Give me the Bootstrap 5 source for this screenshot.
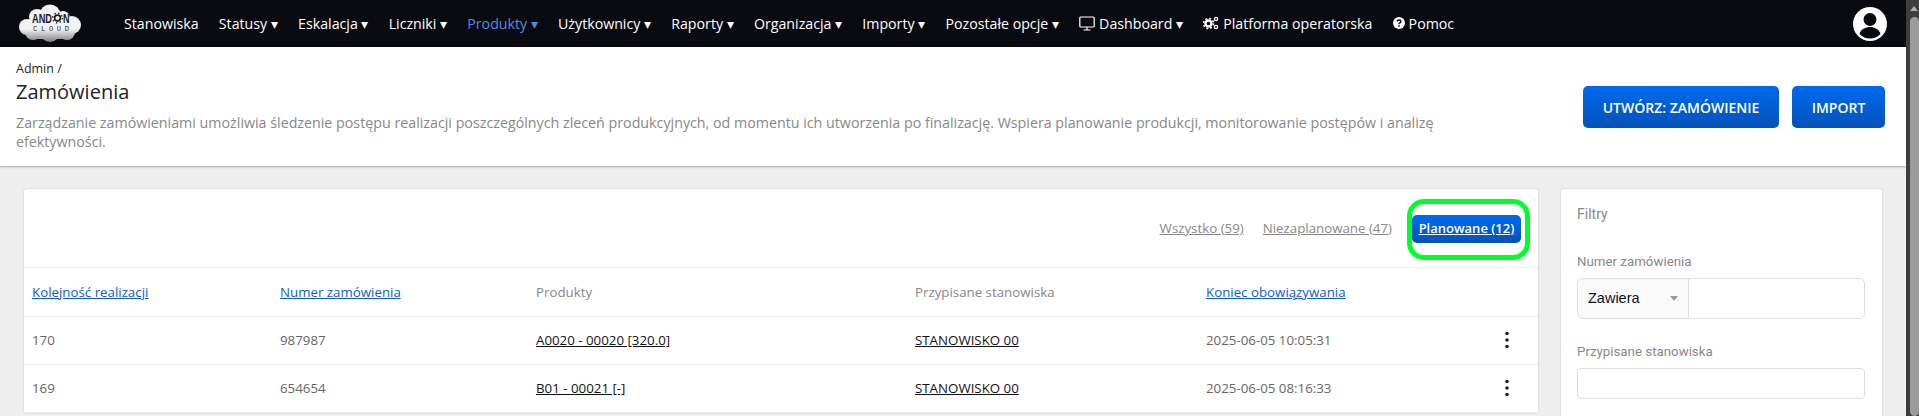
<!DOCTYPE html>
<html lang="pl">
<head>
  <meta charset="UTF-8">
  <meta name="viewport" content="width=device-width, initial-scale=1.0">
  <title>Zamówienia</title>
  <link href="https://cdn.jsdelivr.net/npm/bootstrap@5.3.0/dist/css/bootstrap.min.css" rel="stylesheet">
  <style>
    html, body { height: 416px; overflow: hidden; }
    body { font-family: "Open Sans", sans-serif; font-size: 14px; background: #eee; color: #666; }
    .page-shell { display: flex; height: 416px; }
    .page-main { flex: 1 1 auto; min-width: 0; overflow: hidden; }
    .fake-scroll { width: 13px; flex: none; background: #3d3d3d; display: flex; flex-direction: column; align-items: center; padding-left: 3px; }
    .fake-scroll i { margin-top: 6px; width: 0; height: 0; border: 4px solid transparent; border-top: 0; border-bottom: 5px solid #aaa; }
    .fake-scroll b { width: 9px; height: 400px; margin-top: 6px; background: #9b9b9b; border-radius: 5px; }
    .top-bar { height: 47px; background: #0a0b10; padding: 0 0 0 18px; }
    .top-bar .nav-link { color: #fff; font-size: 14.2px; padding: 0; white-space: nowrap; display: flex; align-items: center; gap: 4px; }
    .top-bar .nav-link.active { color: #4a90e2; }
    .top-links { margin-left: 42px; gap: 20.2px; }
    .logo-cloud { width: 64px; height: 43px; flex: none; }
    .user-pic { width: 34px; height: 34px; margin-right: 19px; }
    .page-head { height: 119px; background: #fff; box-shadow: 0 1px 2px rgba(0,0,0,.3); padding: 13px 21px 0 16px; }
    .crumb { color: #222; font-size: 12.5px; line-height: 17px; margin-bottom: 1px; }
    .page-title { color: #222; font-size: 20px; line-height: 28px; margin: 0 0 8px; font-weight: 400; }
    .page-desc { color: #888; font-size: 14.26px; line-height: 18.5px; margin: 0; width: 1450px; }
    .blue-btn { background: linear-gradient(#0069ee, #0452b8); border: 0; color: #fff; font-weight: 600; border-radius: 5px; height: 42px; font-size: 14px; display: flex; align-items: center; justify-content: center; }
    .head-btns { margin-top: 26px; gap: 13px; }
    .content-wrap { padding: 23px 0 0 24px; gap: 23px; }
    .list-box { width: 1514px; flex: none; background: #fff; border-radius: 3px; box-shadow: 0 0 2px rgba(0,0,0,.2); position: relative; }
    .tabs-row { height: 79px; border-bottom: 1px solid #eee; padding: 1px 17px 0 0; gap: 19px; font-size: 13.3px; }
    .tabs-row a { color: #888; }
    .tabs-row a.on { background: linear-gradient(#0069ee, #0452b8); color: #fff; border-radius: 5px; width: 109px; height: 28px; margin-left: 1px; font-weight: 600; font-size: 13px; display: flex; align-items: center; justify-content: center; }
    .green-ring { position: absolute; left: 1383px; top: 10px; width: 123px; height: 61px; border: 5px solid #00ff2a; border-radius: 17px; }
    .order-table { table-layout: fixed; margin: 0; font-size: 13.3px; color: #666; }
    .order-table th, .order-table td { height: 48px; padding: 2px 8px 0; vertical-align: middle; border-bottom: 1px solid #eee; font-weight: 400; color: #666; }
    .order-table th { color: #888; }
    .order-table th a { color: #0d5bd1; }
    .order-table td a { color: #111; }
    .kebab { width: 4px; height: 18px; display: block; left: 307px; }
    .filter-box { width: 321px; flex: none; height: 300px; background: #fff; border-radius: 3px; box-shadow: 0 0 2px rgba(0,0,0,.2); padding: 16px 16px; font-family: Roboto, sans-serif; }
    .filter-box h6 { color: #888; font-size: 14px; font-weight: 400; line-height: 18px; margin: 0 0 31px; }
    .filter-box label { color: #888; font-size: 13.3px; line-height: 16px; margin: 0 0 8px; display: block; }
    .filter-box .input-group { height: 41px; margin-bottom: 25px; width: 288px; }
    .input-group > .pick-type { width: 112px; flex: none; background-color: #fafafa; background-size: 8px 5px; background-position: right 10px center; background-image: url("data:image/svg+xml,%3csvg xmlns='http://www.w3.org/2000/svg' viewBox='0 0 8 5'%3e%3cpath d='M0 0h8L4 5z' fill='%23999'/%3e%3c/svg%3e"); font-family: "Liberation Sans", sans-serif; font-size: 14.5px; color: #111; border-color: #ddd; padding-left: 10px; }
    .filter-box .form-control { border-color: #ddd; }
    .plain-input { height: 31px; width: 288px; border: 1px solid #ddd; border-radius: 4px; }
  </style>
</head>
<body>
  <div class="page-shell">
    <div class="page-main">
      <nav class="top-bar d-flex align-items-center">
        <svg class="logo-cloud" viewBox="18 3 64 43">
          <defs>
            <linearGradient id="cloudFill" gradientUnits="userSpaceOnUse" x1="0" y1="30" x2="0" y2="44"><stop offset="0" stop-color="#f2f2f2"/><stop offset="1" stop-color="#777"/></linearGradient>
            <filter id="cloudSoft"><feGaussianBlur stdDeviation=".6"/></filter>
          </defs>
          <g fill="url(#cloudFill)" filter="url(#cloudSoft)">
            <circle cx="50" cy="16" r="10.500"/><circle cx="37" cy="18" r="8"/><circle cx="27" cy="28" r="8"/>
            <circle cx="72" cy="26" r="9"/><circle cx="63" cy="19" r="7"/><circle cx="33" cy="33" r="8"/>
            <circle cx="50" cy="33" r="10"/><circle cx="67" cy="33" r="8"/>
            <rect x="30" y="20" width="40" height="20"/>
          </g>
          <text x="32" y="24" font-family="Liberation Sans" font-weight="700" font-size="13" fill="#1a1a1a" textLength="20" lengthAdjust="spacingAndGlyphs">AND</text>
          <circle cx="57.500" cy="19" r="2.900" fill="none" stroke="#1a1a1a" stroke-width="1.600"/>
          <circle cx="57.500" cy="19" r="4.800" fill="none" stroke="#1a1a1a" stroke-width="1.400" stroke-dasharray="1.400 2.370"/>
          <text x="63" y="24" font-family="Liberation Sans" font-weight="700" font-size="13" fill="#1a1a1a" textLength="6.500" lengthAdjust="spacingAndGlyphs">N</text>
          <text x="33" y="31.500" font-family="Liberation Mono" font-size="7" fill="#1a1a1a" textLength="36">CLOUD</text>
        </svg>
        <div class="nav top-links flex-nowrap">
          <a class="nav-link" href="#">Stanowiska</a>
          <a class="nav-link" href="#">Statusy ▾</a>
          <a class="nav-link" href="#">Eskalacja ▾</a>
          <a class="nav-link" href="#">Liczniki ▾</a>
          <a class="nav-link active" href="#">Produkty ▾</a>
          <a class="nav-link" href="#">Użytkownicy ▾</a>
          <a class="nav-link" href="#">Raporty ▾</a>
          <a class="nav-link" href="#">Organizacja ▾</a>
          <a class="nav-link" href="#">Importy ▾</a>
          <a class="nav-link" href="#">Pozostałe opcje ▾</a>
          <a class="nav-link" href="#">
            <svg width="16" height="15" viewBox="0 0 16 15" fill="none" stroke="#fff" stroke-width="1.2"><rect x=".8" y="1" width="14.400" height="10" rx="1"/><path d="M4.500 14h7M8 11v3"/></svg>
            Dashboard ▾</a>
          <a class="nav-link" href="#">
            <svg width="16" height="14" viewBox="0 0 16 14" fill="none" stroke="#fff">
              <circle cx="5.500" cy="7.500" r="3" stroke-width="2.400"/>
              <circle cx="5.500" cy="7.500" r="5" stroke-width="1.600" stroke-dasharray="2 1.930"/>
              <circle cx="13" cy="3" r="1.600" stroke-width="1.300"/>
              <circle cx="13" cy="11" r="1.600" stroke-width="1.300"/>
            </svg>
            Platforma operatorska</a>
          <a class="nav-link" href="#">
            <svg width="12" height="12" viewBox="0 0 12 12"><circle cx="6" cy="6" r="6" fill="#fff"/><path d="M4.200 4.600c0-2.200 3.700-2.200 3.700 0 0 1.400-1.900 1.300-1.900 2.600" fill="none" stroke="#0a0b10" stroke-width="1.400"/><rect x="5.200" y="8.300" width="1.600" height="1.500" fill="#0a0b10"/></svg>
            Pomoc</a>
        </div>
        <svg class="user-pic ms-auto" viewBox="0 0 34 34">
          <circle cx="17" cy="17" r="17" fill="#fff"/>
          <circle cx="17" cy="12.500" r="6.500" fill="#0a0b10"/>
          <path d="M6.500 27c1.500-5 6-7 10.500-7s9 2 10.500 7c-3 3-6.500 4.500-10.500 4.500S9.500 30 6.500 27z" fill="#0a0b10"/>
        </svg>
      </nav>

      <header class="page-head d-flex justify-content-between">
        <div>
          <div class="crumb">Admin /</div>
          <h1 class="page-title">Zamówienia</h1>
          <p class="page-desc">Zarządzanie zamówieniami umożliwia śledzenie postępu realizacji poszczególnych zleceń produkcyjnych, od momentu ich utworzenia po finalizację. Wspiera planowanie produkcji, monitorowanie postępów i analizę efektywności.</p>
        </div>
        <div class="head-btns d-flex flex-none">
          <button class="btn blue-btn" style="width:196px">UTWÓRZ: ZAMÓWIENIE</button>
          <button class="btn blue-btn" style="width:93px">IMPORT</button>
        </div>
      </header>

      <div class="content-wrap d-flex align-items-start">
        <section class="list-box">
          <div class="tabs-row d-flex justify-content-end align-items-center">
            <a href="#">Wszystko (59)</a>
            <a href="#">Niezaplanowane (47)</a>
            <a href="#" class="on">Planowane (12)</a>
          </div>
          <div class="green-ring"></div>
          <table class="table order-table">
            <colgroup><col style="width:248px"><col style="width:256px"><col style="width:379px"><col style="width:291px"><col></colgroup>
            <thead>
              <tr><th><a href="#">Kolejność realizacji</a></th><th><a href="#">Numer zamówienia</a></th><th>Produkty</th><th>Przypisane stanowiska</th><th><a href="#">Koniec obowiązywania</a></th></tr>
            </thead>
            <tbody>
              <tr><td>170</td><td>987987</td><td><a href="#">A0020 - 00020 [320.0]</a></td><td><a href="#">STANOWISKO 00</a></td><td class="position-relative">2025-06-05 10:05:31<svg class="kebab position-absolute top-50 translate-middle-y" viewBox="0 0 4 18" fill="#222"><circle cx="2" cy="2.500" r="1.800"/><circle cx="2" cy="9" r="1.800"/><circle cx="2" cy="15.500" r="1.800"/></svg></td></tr>
              <tr><td>169</td><td>654654</td><td><a href="#">B01 - 00021 [-]</a></td><td><a href="#">STANOWISKO 00</a></td><td class="position-relative">2025-06-05 08:16:33<svg class="kebab position-absolute top-50 translate-middle-y" viewBox="0 0 4 18" fill="#222"><circle cx="2" cy="2.500" r="1.800"/><circle cx="2" cy="9" r="1.800"/><circle cx="2" cy="15.500" r="1.800"/></svg></td></tr>
            </tbody>
          </table>
        </section>
        <aside class="filter-box">
          <h6>Filtry</h6>
          <label>Numer zamówienia</label>
          <div class="input-group">
            <select class="form-select pick-type"><option>Zawiera</option></select>
            <input class="form-control" type="text">
          </div>
          <label>Przypisane stanowiska</label>
          <div class="plain-input"></div>
        </aside>
      </div>
    </div>
    <div class="fake-scroll"><i></i><b></b></div>
  </div>
  <script src="https://cdn.jsdelivr.net/npm/bootstrap@5.3.0/dist/js/bootstrap.bundle.min.js"></script>
</body>
</html>
